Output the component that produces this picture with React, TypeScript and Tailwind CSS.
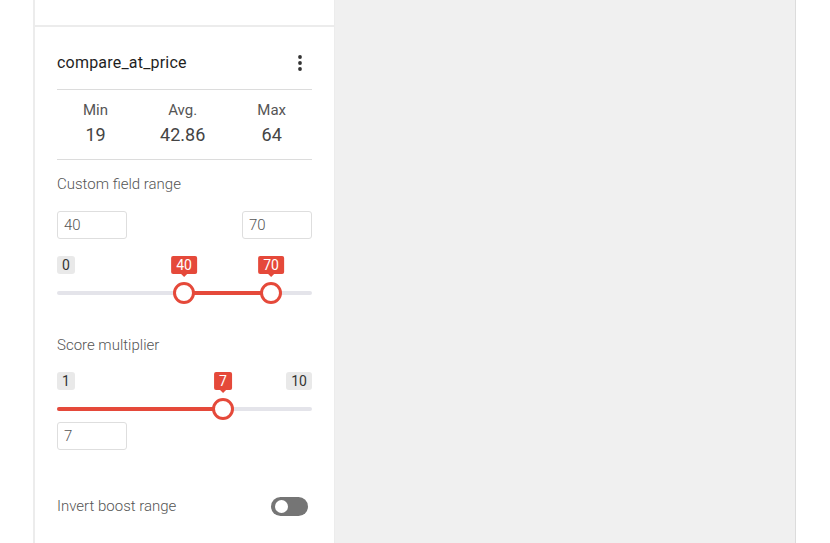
import React from "react";

function Tip({ left, value }: { left: number; value: string }) {
  return (
    <div
      className="absolute top-0 -translate-x-1/2 flex flex-col items-center"
      style={{ left }}
    >
      <div className="h-[18px] px-[5px] rounded-[2px] bg-[#e5493a] text-white text-[14px] leading-[18px]">
        {value}
      </div>
      <div className="w-0 h-0 border-l-[3px] border-r-[3px] border-t-[3px] border-l-transparent border-r-transparent border-t-[#e5493a]" />
    </div>
  );
}

function Badge({ value }: { value: string }) {
  return (
    <div className="h-[18px] px-[5px] rounded-[3px] bg-[#e9e9e9] text-[#333] text-[14px] leading-[18px]">
      {value}
    </div>
  );
}

function Thumb({ left }: { left: number }) {
  return (
    <div
      className="absolute top-0 -translate-x-1/2 w-[22px] h-[22px] rounded-full bg-white border-[3px] border-[#e5493a]"
      style={{ left }}
    />
  );
}

const inputCls =
  "w-[70px] h-[28px] border border-[#dedede] rounded-[3px] pl-[6px] text-[15px] font-light leading-[26px] text-[#555]";

export default function App() {
  return (
    <div
      className="w-[830px] h-[543px] flex bg-white overflow-hidden"
      style={{ fontFamily: "Roboto, 'Liberation Sans', sans-serif" }}
    >
      <div className="w-[33px] shrink-0" />
      <div className="w-[302px] shrink-0 border-l-2 border-r border-[#ececec] flex flex-col">
        <div className="h-[27px] border-b-2 border-[#ececec]" />
        <div className="pl-[22px] pr-[22px] flex flex-col">
          <div className="mt-[25px] h-[22px] flex items-center justify-between">
            <div className="text-[16px] tracking-[0.2px] text-[#1f1f1f]">compare_at_price</div>
            <svg width="8" height="18" viewBox="0 0 8 18" className="mr-[8px]">
              <circle cx="4" cy="3" r="1.9" fill="#333" />
              <circle cx="4" cy="9" r="1.9" fill="#333" />
              <circle cx="4" cy="15" r="1.9" fill="#333" />
            </svg>
          </div>
          <div className="mt-[15px] border-t border-[#dcdcdc]" />
          <div className="flex justify-around pt-[11px] pb-[12px]">
            {[
              ["Min", "19"],
              ["Avg.", "42.86"],
              ["Max", "64"],
            ].map(([l, v]) => (
              <div key={l} className="flex flex-col items-center">
                <div className="text-[15px] leading-[18px] text-[#555]">{l}</div>
                <div className="mt-[4px] text-[18px] leading-[24px] text-[#444]">{v}</div>
              </div>
            ))}
          </div>
          <div className="border-t border-[#dcdcdc]" />
          <div className="mt-[14px] text-[15px] leading-[20px] font-light text-[#555]">
            Custom field range
          </div>
          <div className="mt-[17px] flex justify-between">
            <div className={inputCls}>40</div>
            <div className={inputCls}>70</div>
          </div>
          <div className="mt-[17px] relative h-[18px] flex">
            <Badge value="0" />
            <Tip left={127} value="40" />
            <Tip left={214} value="70" />
          </div>
          <div className="mt-[8px] relative h-[22px]">
            <div className="absolute left-0 right-0 top-[9px] h-[4px] rounded-full bg-[#e4e4ea]" />
            <div className="absolute left-[127px] w-[87px] top-[9px] h-[4px] bg-[#e5493a]" />
            <Thumb left={127} />
            <Thumb left={214} />
          </div>
          <div className="mt-[31px] text-[15px] leading-[20px] font-light text-[#555]">
            Score multiplier
          </div>
          <div className="mt-[17px] relative h-[18px] flex justify-between">
            <Badge value="1" />
            <Tip left={166} value="7" />
            <Badge value="10" />
          </div>
          <div className="mt-[8px] relative h-[22px]">
            <div className="absolute left-0 right-0 top-[9px] h-[4px] rounded-full bg-[#e4e4ea]" />
            <div className="absolute left-0 w-[166px] top-[9px] h-[4px] rounded-l-full bg-[#e5493a]" />
            <Thumb left={166} />
          </div>
          <div className={"mt-[2px] " + inputCls}>7</div>
          <div className="mt-[45px] h-[22px] flex items-center justify-between">
            <div className="text-[15px] font-light text-[#555]">Invert boost range</div>
            <div className="mr-[4px] w-[37px] h-[19px] rounded-full bg-[#757575] flex items-center pl-[4px]">
              <div className="w-[13px] h-[13px] rounded-full bg-white" />
            </div>
          </div>
        </div>
      </div>
      <div className="w-[461px] shrink-0 bg-[#f0f0f0] border-r border-[#dcdcdc]" />
      <div className="flex-1" />
    </div>
  );
}
